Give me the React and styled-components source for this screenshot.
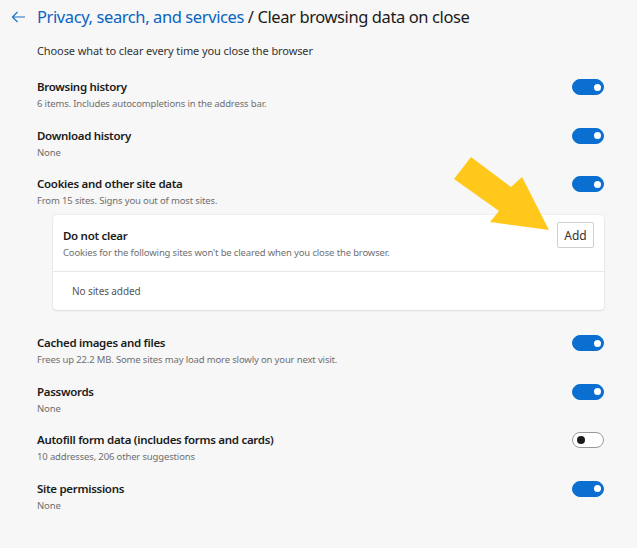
import React from 'react';
import styled, { createGlobalStyle } from 'styled-components';

const GlobalStyle = createGlobalStyle`
    html, body {
        margin: 0;
        padding: 0;
        background: #f7f7f7;
    }
    body {
        font-family: 'Noto Sans', 'Open Sans', sans-serif;
        color: #1b1b1b;
    }
`;

const Page = styled.div`
    position: relative;
    width: 637px;
    height: 548px;
    background: #f7f7f7;
    overflow: hidden;
`;

const Header = styled.div`
    display: flex;
    align-items: center;
    height: 33px;
    padding-left: 11px;
`;

const BackButton = styled.div`
    display: flex;
    align-items: center;
    width: 26px;
    height: 33px;
    color: #1a73c8;
`;

const Title = styled.h1`
    margin: 0;
    font-size: 16.5px;
    font-weight: 400;
    letter-spacing: -0.4px;
    color: #1b1b1b;
    white-space: nowrap;
`;

const Crumb = styled.span`
    color: #0a64c0;
`;

const Content = styled.div`
    padding: 9px 33px 0 37px;
`;

const Intro = styled.div`
    height: 18px;
    line-height: 18px;
    font-size: 11px;
    letter-spacing: -0.1px;
    color: #333;
    margin-bottom: 18px;
`;

const Row = styled.div`
    display: flex;
    align-items: flex-start;
    justify-content: space-between;
    height: 48.5px;
`;

const RowText = styled.div`
    display: flex;
    flex-direction: column;
`;

const RowTitle = styled.div`
    height: 18px;
    line-height: 18px;
    font-size: 11.5px;
    font-weight: 600;
    letter-spacing: -0.3px;
    color: #1b1b1b;
`;

const RowSub = styled.div`
    height: 16px;
    line-height: 16px;
    font-size: 9.5px;
    letter-spacing: -0.15px;
    color: #6f6f6f;
`;

const Toggle = styled.div`
    position: relative;
    box-sizing: border-box;
    width: 32px;
    height: 16px;
    margin-top: 1px;
    border-radius: 8px;
    background: ${({ on }) => (on ? '#0a6fd1' : '#ffffff')};
    border: 1px solid ${({ on }) => (on ? '#0a6fd1' : '#9a9a9a')};

    &::after {
        content: '';
        position: absolute;
        top: 3.5px;
        left: ${({ on }) => (on ? '20.5px' : '4px')};
        width: ${({ on }) => (on ? '7px' : '8px')};
        height: ${({ on }) => (on ? '7px' : '8px')};
        margin-top: ${({ on }) => (on ? '0' : '-0.5px')};
        border-radius: 50%;
        background: ${({ on }) => (on ? '#ffffff' : '#1b1b1b')};
    }
`;

const Card = styled.div`
    margin: -8.5px 0 24px 16px;
    background: #fff;
    border-radius: 4px;
    box-shadow: 0 0 2px rgba(0, 0, 0, 0.12), 0 1px 2px rgba(0, 0, 0, 0.08);
`;

const CardHead = styled.div`
    display: flex;
    justify-content: space-between;
    align-items: flex-start;
    height: 56px;
    padding: 0 10px;
    border-bottom: 1px solid #e8e8e8;
`;

const CardText = styled.div`
    padding-top: 12px;
`;

const AddButton = styled.button`
    margin-top: 7px;
    width: 37px;
    height: 26px;
    padding: 0;
    background: #fff;
    border: 1px solid #cfcfcf;
    border-radius: 2px;
    font-family: inherit;
    font-size: 12px;
    color: #333;
`;

const CardEmpty = styled.div`
    height: 38px;
    line-height: 38px;
    padding-left: 19px;
    font-size: 10px;
    letter-spacing: -0.1px;
    color: #555;
`;

const Pointer = styled.svg`
    position: absolute;
    left: 0;
    top: 0;
    pointer-events: none;
`;

const items = [
    { title: 'Browsing history', sub: '6 items. Includes autocompletions in the address bar.', on: true },
    { title: 'Download history', sub: 'None', on: true },
    { title: 'Cookies and other site data', sub: 'From 15 sites. Signs you out of most sites.', on: true },
];

const more = [
    { title: 'Cached images and files', sub: 'Frees up 22.2 MB. Some sites may load more slowly on your next visit.', on: true },
    { title: 'Passwords', sub: 'None', on: true },
    { title: 'Autofill form data (includes forms and cards)', sub: '10 addresses, 206 other suggestions', on: false },
    { title: 'Site permissions', sub: 'None', on: true },
];

const renderRows = (rows) =>
    rows.map((row) => (
        <Row key={row.title}>
            <RowText>
                <RowTitle>{row.title}</RowTitle>
                <RowSub>{row.sub}</RowSub>
            </RowText>
            <Toggle on={row.on} />
        </Row>
    ));

const App = () => (
    <Page>
        <GlobalStyle />
        <Header>
            <BackButton>
                <svg width="15" height="12" viewBox="0 0 15 12" fill="none">
                    <path d="M14 6H1.5M6.5 1L1.5 6l5 5" stroke="currentColor" strokeWidth="1.2" />
                </svg>
            </BackButton>
            <Title>
                <Crumb>Privacy, search, and services</Crumb> / Clear browsing data on close
            </Title>
        </Header>
        <Content>
            <Intro>Choose what to clear every time you close the browser</Intro>
            {renderRows(items)}
            <Card>
                <CardHead>
                    <CardText>
                        <RowTitle>Do not clear</RowTitle>
                        <RowSub>Cookies for the following sites won't be cleared when you close the browser.</RowSub>
                    </CardText>
                    <AddButton>Add</AddButton>
                </CardHead>
                <CardEmpty>No sites added</CardEmpty>
            </Card>
            {renderRows(more)}
        </Content>
        <Pointer width="637" height="548">
            <polygon
                points="471,157 511,187 522,177 549,230 490,222 499,211 454,179"
                fill="#ffc81a"
            />
        </Pointer>
    </Page>
);

export default App;
